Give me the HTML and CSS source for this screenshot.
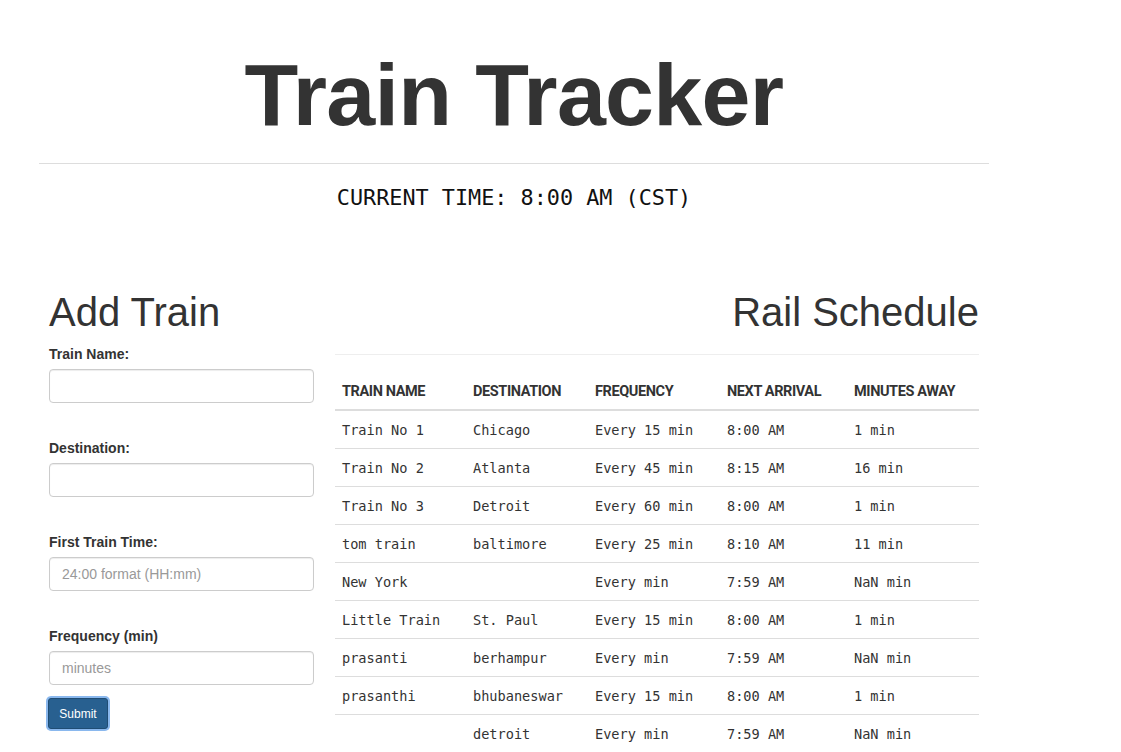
FILE: index.html
```html
<!DOCTYPE html>
<html lang="en">
<head>
<meta charset="utf-8">
<title>Train Tracker</title>
<link rel="stylesheet" href="styles.css">
</head>
<body>
<div class="page">
  <header class="masthead">
    <h1 class="title">Train Tracker</h1>
    <hr class="rule">
    <p class="clock">CURRENT TIME: 8:00 AM (CST)</p>
  </header>
  <div class="main">
    <section class="form-col">
      <h2 class="section-title">Add Train</h2>
      <form class="train-form">
        <div class="group">
          <label class="field-label">Train Name:</label>
          <input class="field" type="text">
        </div>
        <div class="group">
          <label class="field-label">Destination:</label>
          <input class="field" type="text">
        </div>
        <div class="group">
          <label class="field-label">First Train Time:</label>
          <input class="field" type="text" placeholder="24:00 format (HH:mm)">
        </div>
        <div class="group last">
          <label class="field-label">Frequency (min)</label>
          <input class="field" type="text" placeholder="minutes">
        </div>
        <button class="btn-submit" type="button">Submit</button>
      </form>
    </section>
    <section class="table-col">
      <h2 class="section-title right">Rail Schedule</h2>
      <table class="schedule">
        <thead>
          <tr>
            <th class="c1">TRAIN NAME</th>
            <th class="c2">DESTINATION</th>
            <th class="c3">FREQUENCY</th>
            <th class="c4">NEXT ARRIVAL</th>
            <th class="c5">MINUTES AWAY</th>
          </tr>
        </thead>
        <tbody>
          <tr><td>Train No 1</td><td>Chicago</td><td>Every 15 min</td><td>8:00 AM</td><td>1 min</td></tr>
          <tr><td>Train No 2</td><td>Atlanta</td><td>Every 45 min</td><td>8:15 AM</td><td>16 min</td></tr>
          <tr><td>Train No 3</td><td>Detroit</td><td>Every 60 min</td><td>8:00 AM</td><td>1 min</td></tr>
          <tr><td>tom train</td><td>baltimore</td><td>Every 25 min</td><td>8:10 AM</td><td>11 min</td></tr>
          <tr><td>New York</td><td></td><td>Every min</td><td>7:59 AM</td><td>NaN min</td></tr>
          <tr><td>Little Train</td><td>St. Paul</td><td>Every 15 min</td><td>8:00 AM</td><td>1 min</td></tr>
          <tr><td>prasanti</td><td>berhampur</td><td>Every min</td><td>7:59 AM</td><td>NaN min</td></tr>
          <tr><td>prasanthi</td><td>bhubaneswar</td><td>Every 15 min</td><td>8:00 AM</td><td>1 min</td></tr>
          <tr><td></td><td>detroit</td><td>Every min</td><td>7:59 AM</td><td>NaN min</td></tr>
        </tbody>
      </table>
    </section>
  </div>
</div>
</body>
</html>
```

FILE: styles.css
```css
html, body {
  margin: 0;
  padding: 0;
  background: #fff;
}

body {
  font-family: "Liberation Sans", Arial, sans-serif;
  font-size: 14px;
  color: #333;
  overflow: hidden;
}

.page {
  width: 950px;
  margin-left: 39px;
}

.masthead {
  display: flex;
  flex-direction: column;
  align-items: stretch;
}

.title {
  margin: 51px 0 0;
  font-size: 88px;
  line-height: 88px;
  font-weight: 700;
  text-align: center;
  color: #333;
  letter-spacing: -0.7px;
}

.rule {
  margin: 24px 0 0;
  border: 0;
  border-top: 1px solid #ddd;
  height: 0;
}

.clock {
  margin: 19px 0 0;
  text-align: center;
  font-family: "DejaVu Sans Mono", "Liberation Mono", monospace;
  font-size: 21.8px;
  line-height: 30px;
  color: #111;
}

.main {
  display: flex;
  align-items: flex-start;
  gap: 21px;
  padding: 0 10px;
  margin-top: 77px;
}

.form-col {
  width: 265px;
  flex: none;
}

.table-col {
  width: 644px;
  flex: none;
}

.section-title {
  margin: 0;
  font-size: 40px;
  line-height: 44px;
  font-weight: 400;
  color: #333;
}

.section-title.right {
  text-align: right;
}

.train-form {
  margin-top: 10px;
}

.group {
  margin-bottom: 35px;
}

.group.last {
  margin-bottom: 13px;
}

.field-label {
  display: block;
  font-weight: 700;
  font-size: 14px;
  line-height: 20px;
  margin-bottom: 5px;
}

.field {
  display: block;
  box-sizing: border-box;
  width: 265px;
  height: 34px;
  padding: 6px 12px;
  font-family: "Liberation Sans", Arial, sans-serif;
  font-size: 14px;
  color: #555;
  background: #fff;
  border: 1px solid #ccc;
  border-radius: 4px;
  box-shadow: inset 0 1px 1px rgba(0, 0, 0, 0.075);
  outline: none;
}

.field::placeholder {
  color: #999;
}

.btn-submit {
  display: block;
  box-sizing: border-box;
  margin-left: -1px;
  height: 31px;
  width: 60px;
  padding: 0;
  font-family: "Liberation Sans", Arial, sans-serif;
  font-size: 12px;
  color: #fff;
  background: #286090;
  border: 1px solid #204d74;
  border-radius: 3px;
  box-shadow: 0 0 0 2px #8ab8ee;
}

.schedule {
  margin-top: 20px;
  width: 644px;
  border-collapse: collapse;
  border-top: 1px solid #eee;
  table-layout: fixed;
}

.schedule th {
  text-align: left;
  font-family: Roboto, "Liberation Sans", sans-serif;
  font-weight: 700;
  font-size: 14.5px;
  letter-spacing: -0.4px;
  color: #333;
  padding: 28px 7px 8px;
  line-height: 18px;
  border-bottom: 2px solid #ddd;
}

.schedule .c1 { width: 117px; }
.schedule .c2 { width: 108px; }
.schedule .c3 { width: 118px; }
.schedule .c4 { width: 113px; }
.schedule .c5 { width: auto; }

.schedule td {
  font-family: "DejaVu Sans Mono", "Liberation Mono", monospace;
  font-size: 13.6px;
  color: #333;
  padding: 0 7px;
  height: 37px;
  line-height: 20px;
  border-bottom: 1px solid #ddd;
  white-space: nowrap;
}
```
